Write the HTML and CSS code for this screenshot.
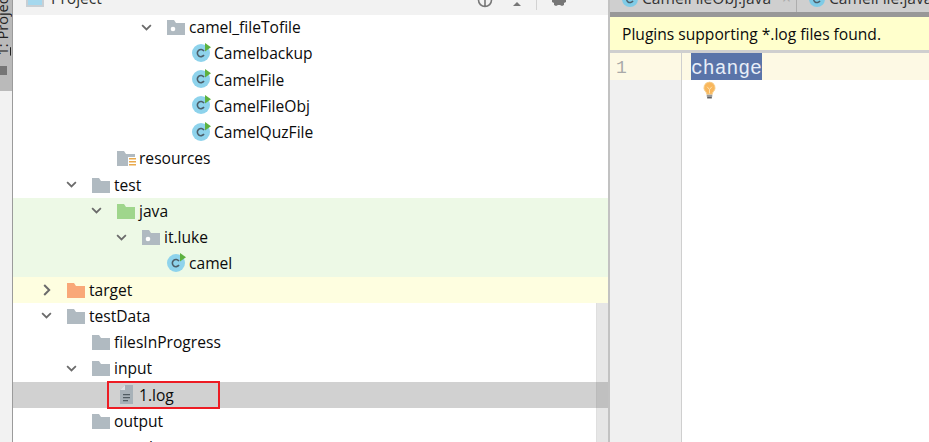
FILE: index.html
```html
<!DOCTYPE html>
<html>
<head>
<meta charset="utf-8">
<title>Project</title>
<link rel="stylesheet" href="styles.css">
</head>
<body>
<svg width="0" height="0" class="defs">
  <symbol id="folder" viewBox="0 0 18 16"><path d="M0 1h7l2 3h9v12H0z" fill="#b0bac1"/></symbol>
  <symbol id="pkg" viewBox="0 0 18 16"><path d="M0 1h7l2 3h9v12H0z" fill="#b0bac1"/><circle cx="6" cy="10" r="2.3" fill="#fff"/></symbol>
  <symbol id="green" viewBox="0 0 18 16"><path d="M0 1h7l2 3h9v12H0z" fill="#9fd68c"/></symbol>
  <symbol id="orange" viewBox="0 0 18 16"><path d="M0 1h7l2 3h9v12H0z" fill="#f9a878"/></symbol>
  <symbol id="res" viewBox="0 0 20 18"><path d="M0 1h7l2 3h9v3H11v9H0z" fill="#b0bac1"/><path d="M12 8h7v1.6h-7zM12 11h7v1.6h-7zM12 14h7v1.6h-7z" fill="#e9a94c"/></symbol>
  <symbol id="cls" viewBox="0 0 19 19"><circle cx="9" cy="10" r="9" fill="#8ed3ec"/><path d="M12 8.2a3.6 3.6 0 1 0 0 3.8" fill="none" stroke="#4c5f6a" stroke-width="1.6"/><path d="M13 0l6 4.2-6 4.2z" fill="#5db13f"/></symbol>
  <symbol id="cls-plain" viewBox="0 0 16 16"><circle cx="8" cy="8" r="8" fill="#7fcbe6"/><path d="M11 6.5a3.4 3.4 0 1 0 0 3.4" fill="none" stroke="#4c5f6a" stroke-width="1.5"/></symbol>
  <symbol id="mvn" viewBox="0 0 18 16"><path d="M1 16V3l4 4 4-4 4 4 4-4v13" fill="#c6d3dc"/></symbol>
  <symbol id="log" viewBox="0 0 13 19"><path d="M5 0h8v19H0V5z" fill="#a7b1b8"/><path d="M0 5l5-5v5z" fill="#dfe3e6"/><path d="M3 9h7v1.3H3zM3 12h7v1.3H3zM3 15h5v1.3H3z" fill="#4f5b62"/></symbol>
  <symbol id="chev-d" viewBox="0 0 12 8"><path d="M1 1.2l5 5 5-5" fill="none" stroke="#6b6b6b" stroke-width="2"/></symbol>
  <symbol id="chev-r" viewBox="0 0 8 12"><path d="M1.2 1l5 5-5 5" fill="none" stroke="#6b6b6b" stroke-width="2"/></symbol>
</svg>
<div class="window">
  <aside class="strip">
    <div class="strip-top">
      <span class="strip-label"><span class="mnemonic">1</span>: Project</span>
      <span class="strip-icon"></span>
    </div>
  </aside>
  <section class="project">
    <header class="proj-head">
      <div class="proj-title">
        <span class="proj-icon"></span>
        <span class="proj-name">Project</span>
      </div>
      <div class="proj-tools">
        <svg class="tool-globe" width="16" height="8" viewBox="0 0 16 8"><path d="M1.5 0a6.5 6.5 0 0 0 13 0M8 0v6.5" fill="none" stroke="#777" stroke-width="1.6"/></svg>
        <span class="tool-up"></span>
        <span class="tool-sep"></span>
        <svg class="tool-gear" width="16" height="7" viewBox="0 0 16 7"><path d="M1 0h14v2l-2 1v2l-2 1-2-1H7L5 6 3 5V3L1 2z" fill="#777"/></svg>
      </div>
    </header>
    <div class="tree">
      <div class="row l4"><svg class="chev"><use href="#chev-d"/></svg><svg class="ic"><use href="#pkg"/></svg><span>camel_fileTofile</span></div>
      <div class="row l5"><span class="chev"></span><svg class="ic ic-c"><use href="#cls"/></svg><span>Camelbackup</span></div>
      <div class="row l5"><span class="chev"></span><svg class="ic ic-c"><use href="#cls"/></svg><span>CamelFile</span></div>
      <div class="row l5"><span class="chev"></span><svg class="ic ic-c"><use href="#cls"/></svg><span>CamelFileObj</span></div>
      <div class="row l5"><span class="chev"></span><svg class="ic ic-c"><use href="#cls"/></svg><span>CamelQuzFile</span></div>
      <div class="row l2"><span class="chev"></span><svg class="ic ic-r"><use href="#res"/></svg><span>resources</span></div>
      <div class="row l1"><svg class="chev"><use href="#chev-d"/></svg><svg class="ic"><use href="#folder"/></svg><span>test</span></div>
      <div class="row l2 tint-green"><svg class="chev"><use href="#chev-d"/></svg><svg class="ic"><use href="#green"/></svg><span>java</span></div>
      <div class="row l3 tint-green"><svg class="chev"><use href="#chev-d"/></svg><svg class="ic"><use href="#pkg"/></svg><span>it.luke</span></div>
      <div class="row l4 tint-green"><span class="chev"></span><svg class="ic ic-c"><use href="#cls"/></svg><span>camel</span></div>
      <div class="row l0 tint-yellow"><svg class="chev chev-right"><use href="#chev-r"/></svg><svg class="ic"><use href="#orange"/></svg><span>target</span></div>
      <div class="row l0"><svg class="chev"><use href="#chev-d"/></svg><svg class="ic"><use href="#folder"/></svg><span>testData</span></div>
      <div class="row l1"><span class="chev"></span><svg class="ic"><use href="#folder"/></svg><span>filesInProgress</span></div>
      <div class="row l1"><svg class="chev"><use href="#chev-d"/></svg><svg class="ic"><use href="#folder"/></svg><span>input</span></div>
      <div class="row l2 selected"><span class="chev"></span><svg class="ic ic-log"><use href="#log"/></svg><span>1.log</span><span class="redbox"></span></div>
      <div class="row l1"><span class="chev"></span><svg class="ic"><use href="#folder"/></svg><span>output</span></div>
      <div class="row l0"><span class="chev"></span><svg class="ic"><use href="#mvn"/></svg><span>pom.xml</span></div>
      <div class="scrollbar"></div>
    </div>
  </section>
  <section class="editor">
    <div class="tabs">
      <div class="tab tab-active"><svg class="tab-ic"><use href="#cls-plain"/></svg><span>CamelFileObj.java</span><span class="tab-x">×</span></div>
      <div class="tab"><svg class="tab-ic"><use href="#cls-plain"/></svg><span>CamelFile.java</span></div>
    </div>
    <div class="banner">Plugins supporting *.log files found.</div>
    <div class="code">
      <div class="gutter"><div class="gutter-line">1</div></div>
      <div class="text">
        <div class="code-line"><span class="sel">change</span></div>
        <svg class="bulb" width="15" height="19" viewBox="0 0 16 20">
          <path d="M8 1a6 6 0 0 0-4 10.4c.8.8 1 1.6 1 2.6h6c0-1 .2-1.8 1-2.6A6 6 0 0 0 8 1z" fill="#f9b75c" stroke="#f5cf8e"/>
          <path d="M5.5 6l2.5 3 2.5-3M8 9v4" fill="none" stroke="#fde3b0"/>
          <path d="M5 14.5h6v2H5z" fill="#9a9a9a"/><path d="M5.5 16.5h5v2h-5z" fill="#5f5f5f"/>
        </svg>
      </div>
    </div>
  </section>
</div>
</body>
</html>
```
FILE: styles.css
```css
* { box-sizing: border-box; }
html, body { margin: 0; padding: 0; height: 100%; background: #fff; overflow: hidden; }
.defs { position: absolute; }
.window {
  display: flex;
  width: 929px;
  height: 442px;
  overflow: hidden;
  font-family: "Open Sans", "Noto Sans", sans-serif;
  color: #0b0b0b;
}

.strip {
  width: 13px;
  flex: none;
  background: #f2f2f2;
  border-right: 1px solid #9b9b9b;
  overflow: hidden;
}
.strip-top {
  height: 91px;
  background: #bababa;
  display: flex;
  flex-direction: column;
  align-items: flex-start;
  justify-content: flex-end;
  overflow: hidden;
  padding-bottom: 16px;
}
.strip-label {
  writing-mode: vertical-rl;
  transform: rotate(180deg);
  font-size: 14.6px;
  line-height: 14px;
  white-space: nowrap;
  color: #222;
  margin-bottom: 10px;
  margin-left: -5px;
  flex: none;
}
.mnemonic { text-decoration: underline; }
.strip-icon {
  display: block;
  width: 7px;
  height: 9px;
  background: #757575;
  flex: none;
}

.project {
  width: 595px;
  flex: none;
  display: flex;
  flex-direction: column;
}
.proj-head {
  height: 15px;
  flex: none;
  background: #f2f2f2;
  display: flex;
  justify-content: space-between;
  align-items: flex-end;
  overflow: hidden;
  position: relative;
  z-index: 1;
}
.proj-title {
  display: flex;
  align-items: flex-end;
  padding-left: 13px;
  height: 15px;
}
.proj-icon {
  display: block;
  width: 18px;
  height: 7px;
  margin-bottom: 8px;
  background: #a5d8ee;
  border: 2px solid #c8cfd4;
  border-top: 0;
}
.proj-name {
  font-size: 15.6px;
  line-height: 20px;
  margin: 0 0 7px 7px;
  color: #333;
}
.proj-tools {
  display: flex;
  align-items: flex-start;
  height: 15px;
  padding-right: 41px;
}
.tool-up {
  display: block;
  width: 0;
  height: 0;
  margin: 2px 0 0 20px;
  border-left: 4px solid transparent;
  border-right: 4px solid transparent;
  border-bottom: 4px solid #777;
}
.tool-sep {
  display: block;
  width: 1px;
  height: 10px;
  background: #d2d2d2;
  margin-left: 15px;
}
.tool-gear { margin-left: 14px; }

.tree {
  flex: 1;
  display: flex;
  flex-direction: column;
  position: relative;
  overflow: hidden;
  margin-top: -1px;
}
.row {
  height: 26.25px;
  flex: none;
  display: flex;
  align-items: center;
  position: relative;
  font-size: 15.6px;
  white-space: nowrap;
}
.l0 { padding-left: 28px; }
.l1 { padding-left: 53px; }
.l2 { padding-left: 78px; }
.l3 { padding-left: 103px; }
.l4 { padding-left: 128px; }
.l5 { padding-left: 153px; }
.chev {
  display: block;
  width: 11px;
  height: 7px;
  flex: none;
  margin-right: 15px;
}
.chev-right { width: 8px; height: 12px; margin-left: 2px; margin-right: 16px; }
.ic {
  display: block;
  width: 18px;
  height: 16px;
  flex: none;
  margin-right: 4px;
}
.ic-c { width: 19px; height: 19px; margin-right: 3px; margin-top: -2px; }
.ic-r { height: 18px; width: 20px; margin-right: 2px; margin-top: 2px; }
.ic-log { width: 13px; height: 19px; margin-left: 3px; margin-right: 6px; }
.tint-green { background: #edf9e6; }
.tint-yellow { background: #fefee0; }
.selected { background: #d1d1d1; }
.redbox {
  position: absolute;
  left: 94px;
  top: -1px;
  width: 113px;
  height: 28px;
  border: 2px solid #ed1c24;
  z-index: 2;
}
.scrollbar {
  position: absolute;
  right: 0;
  top: 289px;
  bottom: 0;
  width: 12px;
  background: rgba(120, 120, 120, 0.19);
  border-left: 1px solid rgba(120,120,120,0.06);
}

.editor {
  flex: 1;
  display: flex;
  flex-direction: column;
  border-left: 2px solid #c2c2c2;
  min-width: 0;
}
.tabs {
  height: 17px;
  flex: none;
  background: #cfcfcf;
  display: flex;
  align-items: flex-start;
  overflow: hidden;
  border-bottom: 5px solid #989898;
}
.tab {
  flex: none;
  height: 12px;
  display: flex;
  align-items: flex-start;
  gap: 4px;
  padding-left: 12px;
  border-right: 1px solid #aeaeae;
  font-size: 15.6px;
  line-height: 20px;
  color: #333;
  white-space: nowrap;
}
.tab span { display: block; margin-top: -12px; }
.tab-active { width: 187px; }
.tab-ic { width: 16px; height: 16px; flex: none; margin-top: -9px; }
.tab-x { color: #aaa; margin-left: 7px; }
.banner {
  height: 33px;
  flex: none;
  background: #ffffcc;
  padding: 7px 0 0 12px;
  font-size: 15.6px;
  line-height: 20px;
  white-space: nowrap;
}
.code {
  flex: 1;
  display: flex;
  border-top: 3px solid #cfcfcf;
}
.gutter {
  width: 72px;
  flex: none;
  background: #f0f0f0;
  border-right: 1px solid #cfcfcf;
}
.gutter-line {
  height: 27px;
  background: #fdf9e4;
  padding-left: 6px;
  font-family: "Liberation Mono", monospace;
  font-size: 18px;
  line-height: 31px;
  color: #a9a9a9;
}
.text { flex: 1; }
.code-line {
  height: 27px;
  background: #fdf9e4;
  padding-left: 9px;
  font-family: "Liberation Mono", monospace;
  font-size: 19.7px;
  line-height: 33px;
}
.sel {
  display: inline-block;
  height: 27px;
  background: #5a74a9;
  color: #e8eef8;
  vertical-align: top;
}
.bulb { display: block; margin: 1px 0 0 20px; }
```
